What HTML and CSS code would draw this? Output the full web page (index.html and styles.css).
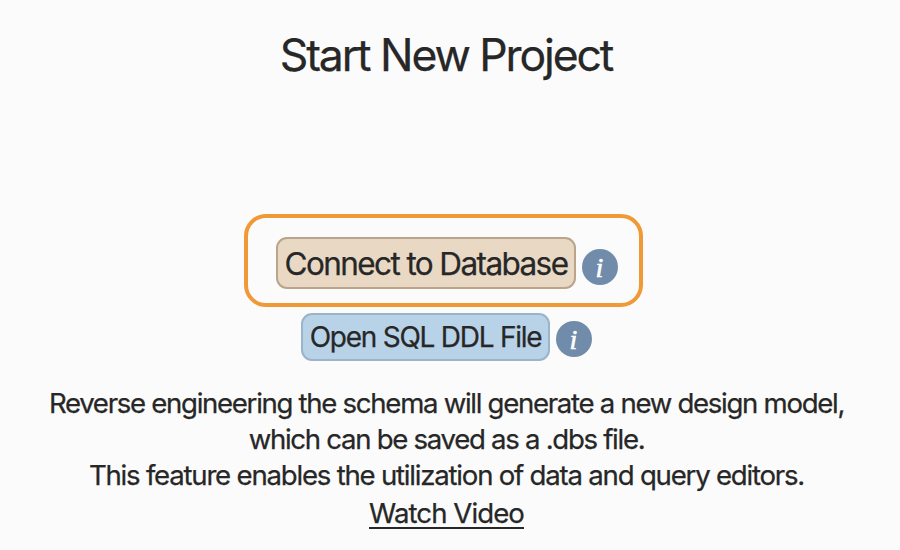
FILE: index.html
```html
<!DOCTYPE html>
<html lang="en">
<head>
<meta charset="utf-8">
<title>Start New Project</title>
<link rel="stylesheet" href="styles.css">
</head>
<body>
<main class="page">
  <h1 class="title">Start New Project</h1>
  <section class="actions">
    <div class="highlight">
      <button class="btn btn-connect">Connect to Database</button>
      <svg class="info" viewBox="0 0 36 36" aria-label="Info"><circle cx="18" cy="18" r="18"/><text x="17.5" y="27.5">i</text></svg>
    </div>
    <div class="row">
      <button class="btn btn-open">Open SQL DDL File</button>
      <svg class="info" viewBox="0 0 36 36" aria-label="Info"><circle cx="18" cy="18" r="18"/><text x="17.5" y="27.5">i</text></svg>
    </div>
  </section>
  <section class="description">
    <p class="line line-1">Reverse engineering the schema will generate a new design model,</p>
    <p class="line line-2">which can be saved as a .dbs file.</p>
    <p class="line line-3">This feature enables the utilization of data and query editors.</p>
    <a class="video" href="#">Watch Video</a>
  </section>
</main>
</body>
</html>
```
FILE: styles.css
```css
* { box-sizing: border-box; }
body {
  margin: 0;
  background: #fbfbfb;
  color: #272727;
  font-family: Inter, "Liberation Sans", sans-serif;
  -webkit-text-stroke: 0.25px;
}
.page {
  width: 893px;
  height: 550px;
  padding-top: 27px;
  display: flex;
  flex-direction: column;
  align-items: center;
  overflow: hidden;
  white-space: nowrap;
}
.title {
  margin: 0 1px 0 0;
  font-size: 44.5px;
  line-height: 57px;
  font-weight: 400;
  letter-spacing: -2.1px;
}
.actions {
  margin-top: 130px;
  display: flex;
  flex-direction: column;
  align-items: center;
}
.highlight {
  width: 399px;
  height: 93px;
  margin-right: 6px;
  border: 4px solid #f09a37;
  border-radius: 22px;
  padding: 19px 0 0 28px;
  display: flex;
  gap: 6px;
}
.row {
  margin-top: 6px;
  display: flex;
  gap: 6px;
}
.btn {
  padding: 0;
  border: 2px solid;
  border-radius: 11px;
  color: #272727;
  font-family: inherit;
  white-space: nowrap;
}
.btn-connect {
  width: 300px;
  height: 52px;
  background: #e8d8c4;
  border-color: #baa58a;
  font-size: 31.5px;
  letter-spacing: -1.6px;
}
.btn-open {
  width: 249px;
  height: 48px;
  background: #b8d2e8;
  border-color: #9bb4c9;
  font-size: 28px;
  letter-spacing: -1.25px;
}
.info {
  width: 36px;
  height: 36px;
  flex: none;
  margin-top: 12px;
  fill: #708caa;
}
.row .info { margin-top: 8px; }
.info text {
  fill: #fff;
  stroke: #fff;
  stroke-width: 0.6px;
  font-family: "Liberation Serif", serif;
  font-size: 28px;
  font-style: italic;
  text-anchor: middle;
}
.description {
  margin-top: 24px;
  display: flex;
  flex-direction: column;
  align-items: center;
  font-size: 27.6px;
  line-height: 36px;
  letter-spacing: -1.3px;
}
.line { margin: 0; }
.line-3 { letter-spacing: -1.22px; }
.video {
  margin-top: 3px;
  color: inherit;
  text-decoration: none;
  line-height: 34px;
  height: 33px;
  letter-spacing: -0.94px;
  border-bottom: 2px solid #272727;
}
```
